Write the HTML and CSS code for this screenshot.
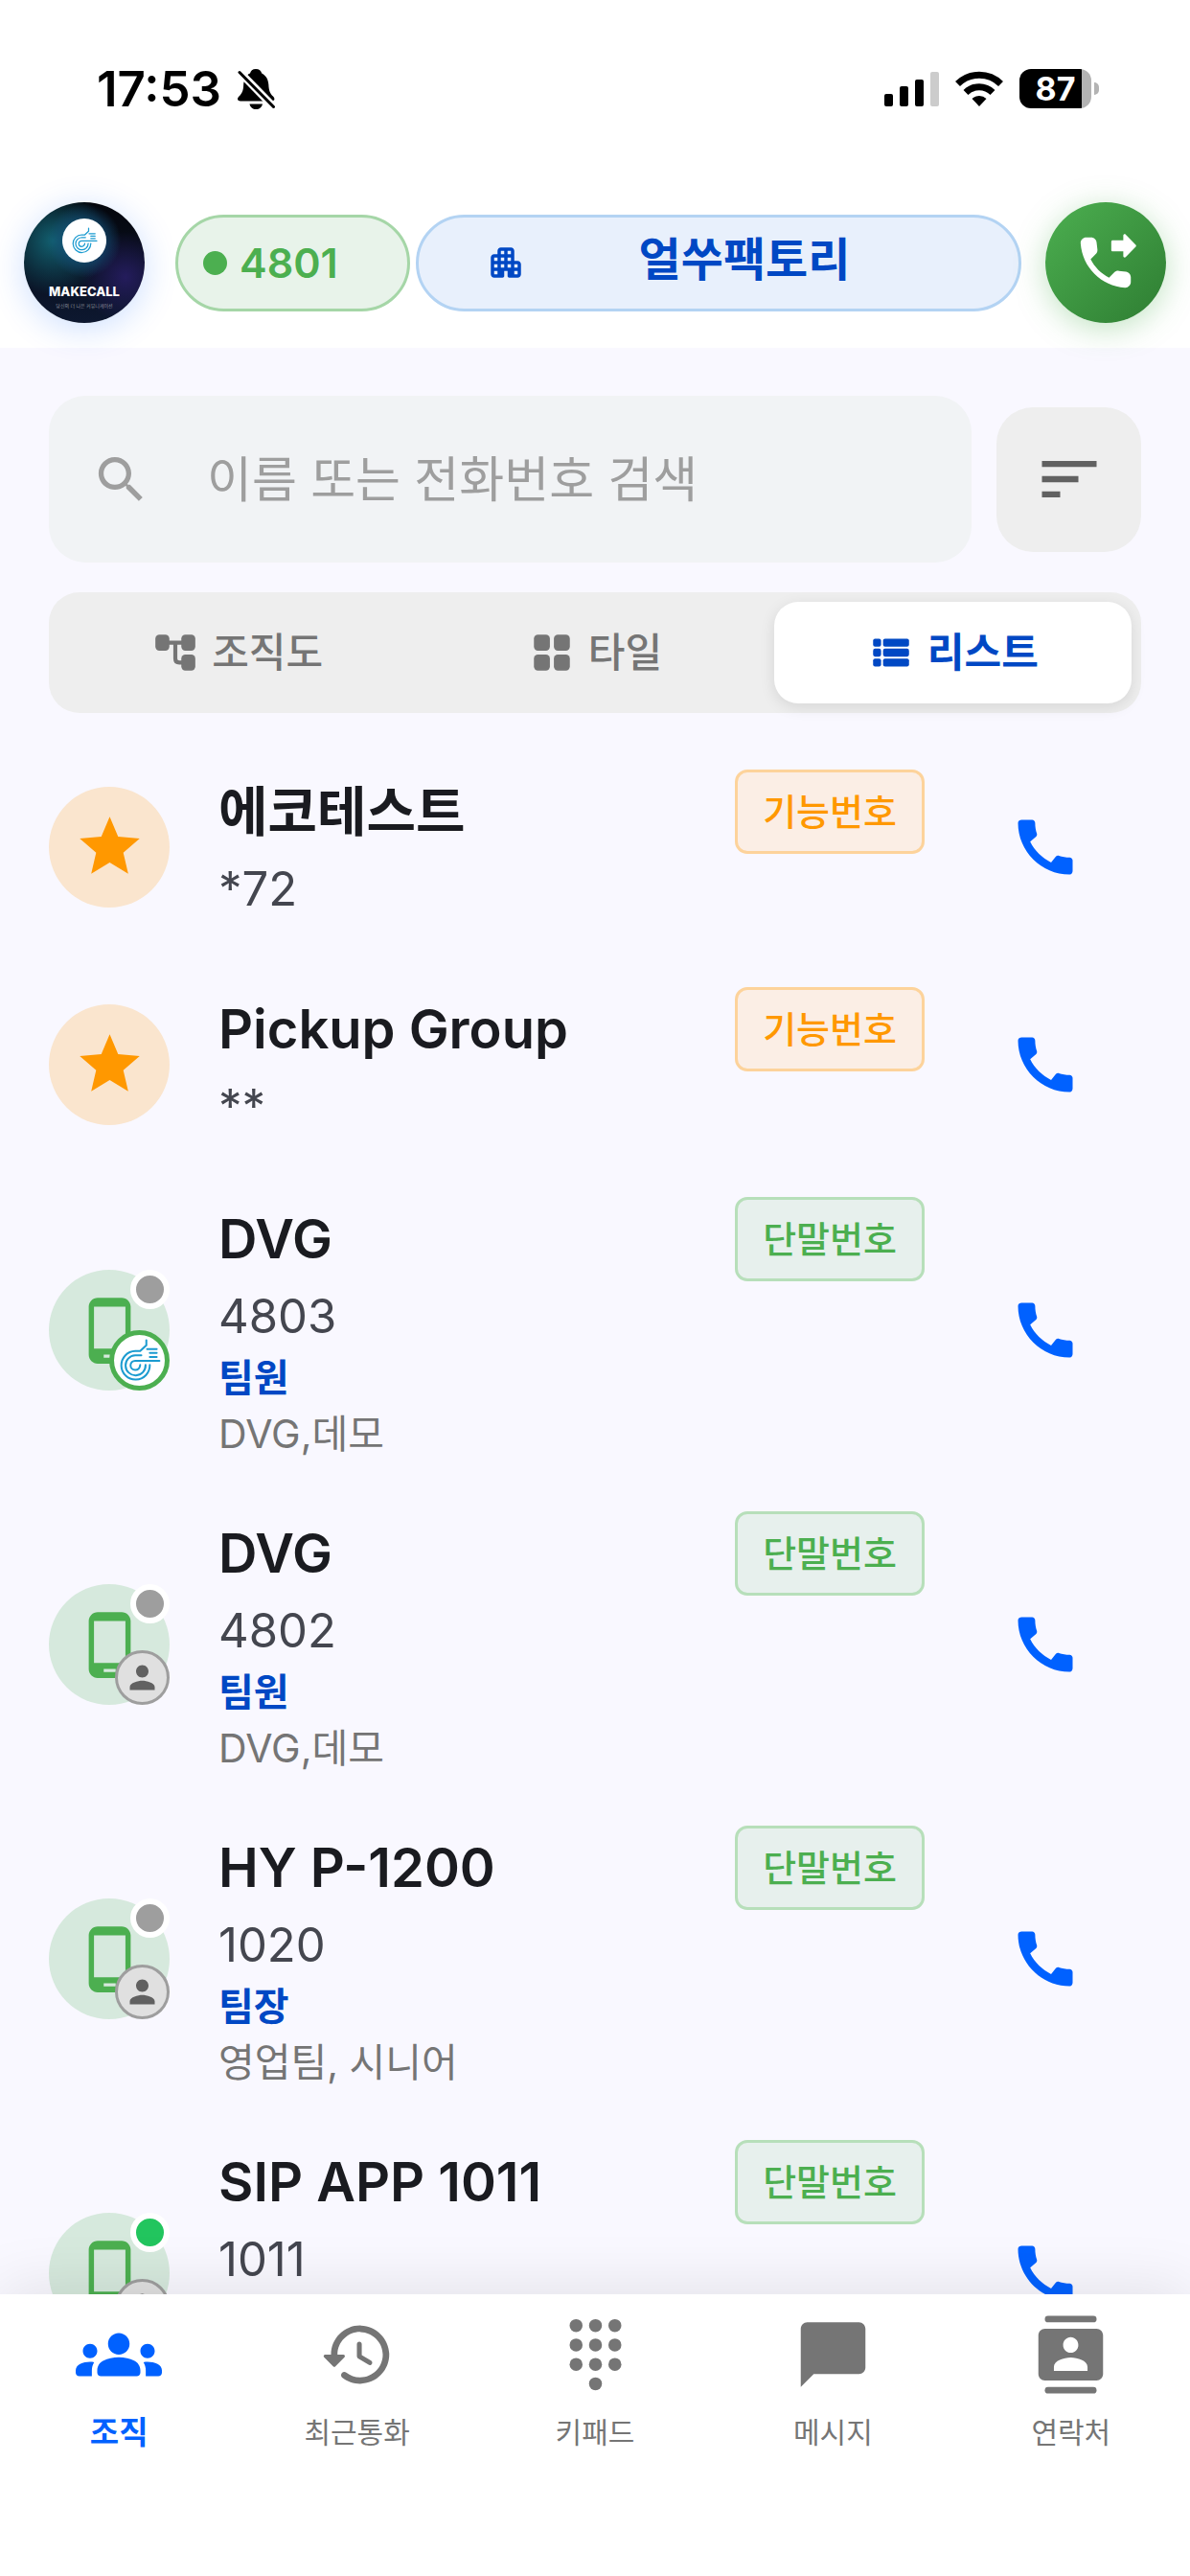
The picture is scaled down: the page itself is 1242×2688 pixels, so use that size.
FILE: index.html
```html
<!DOCTYPE html>
<html lang="ko">
<head>
    <meta charset="UTF-8">
    <meta name="viewport" content="width=device-width, initial-scale=1.0">
    <title>MAKECALL</title>
    <link rel="stylesheet" href="styles.css">
</head>
<body>
    <!-- 아이콘 모음 -->
    <svg class="sprite" aria-hidden="true">
        <symbol id="i-call" viewBox="0 0 24 24">
            <path d="M20.01 15.38c-1.23 0-2.42-.2-3.53-.56-.35-.12-.74-.03-1.01.24l-1.57 1.97c-2.83-1.35-5.48-3.9-6.89-6.83l1.95-1.66c.27-.28.35-.67.24-1.02-.37-1.11-.56-2.3-.56-3.53 0-.54-.45-.99-.99-.99H4.19C3.65 3 3 3.24 3 3.99 3 13.28 10.73 21 20.01 21c.71 0 .99-.63.99-1.18v-3.45c0-.54-.45-.99-.99-.99z"/>
        </symbol>
        <symbol id="i-star" viewBox="0 0 24 24">
            <path d="M12 17.27L18.18 21l-1.64-7.03L22 9.24l-7.19-.61L12 2 9.19 8.63 2 9.24l5.46 4.73L5.82 21z"/>
        </symbol>
        <symbol id="i-phone" viewBox="0 0 24 24">
            <path d="M16 1H8C6.34 1 5 2.34 5 4v16c0 1.66 1.34 3 3 3h8c1.66 0 3-1.34 3-3V4c0-1.66-1.34-3-3-3zm-2 20h-4v-1h4v1zm3.25-3H6.75V4h10.5v14z"/>
        </symbol>
        <symbol id="i-person" viewBox="0 0 24 24">
            <path d="M12 12c2.21 0 4-1.79 4-4s-1.79-4-4-4-4 1.79-4 4 1.79 4 4 4zm0 2c-2.67 0-8 1.34-8 4v2h16v-2c0-2.66-5.33-4-8-4z"/>
        </symbol>
        <symbol id="i-logo" viewBox="310 460 112 112">
            <g fill="none" stroke="#1b9bd0" stroke-width="5" stroke-linecap="round">
                <path d="M384 464v13l-16 15h-13a37 37 0 1 0 38 36"/>
                <path d="M371 503h-16a26 26 0 1 0 27 25"/>
                <path d="M418 517h-63a12 12 0 1 0 0 24c7 0 12-5 13-13"/>
                <path d="M386 487h25M393 497h18M393 507h18"/>
            </g>
        </symbol>
    </svg>

    <div class="app">
        <div class="status">
            <div class="status_left">
                <span class="time">17:53</span>
                <svg class="bell" viewBox="0 0 40 42">
                    <path d="M19 0c3.600 0 5.500 2 6.200 4.500C30 7 31.800 11 32.300 16c.4 7 1.500 9.500 4.700 12.500 2.500 2.500 1.500 5-1.500 5H3c-3.200 0-4-2.700-1.500-5C4.500 25.500 6 23 6.200 16 6.500 11 8.500 6.500 13 4.500 13.700 2 15.500 0 19 0zM12.500 36.500h13.500c-.7 3.500-3.300 5.500-6.700 5.500s-6.200-2-6.800-5.500z"/>
                    <path d="M2 3l36 37" stroke="#fff" stroke-width="8"/>
                    <path d="M2 3.500l35.500 36" stroke="#000" stroke-width="3" stroke-linecap="round"/>
                </svg>
            </div>
            <div class="status_right">
                <svg class="signal" viewBox="0 0 57 36">
                    <rect x="0" y="23" width="9" height="13" rx="2"/>
                    <rect x="16" y="15" width="9" height="21" rx="2"/>
                    <rect x="32" y="8" width="9" height="28" rx="2"/>
                    <rect x="48" y="0" width="9" height="36" rx="2" fill="#ccc"/>
                </svg>
                <svg class="wifi" viewBox="0 0 50 37">
                    <g fill="none" stroke="#000" stroke-width="7">
                        <path d="M2.500 13.500a32 32 0 0 1 45 0"/>
                        <path d="M11 22.500a20 20 0 0 1 28 0"/>
                    </g>
                    <path d="M25 37l-7.500-8a11 11 0 0 1 15 0z"/>
                </svg>
                <div class="battery"><span class="battery_body">87</span><span class="battery_tip"></span></div>
            </div>
        </div>

        <header class="header">
            <a href="#" class="profile" aria-label="MAKECALL">
                <span class="profile_logo"><svg><use href="#i-logo"/></svg></span>
                <strong>MAKECALL</strong>
                <small>당신의 더 나은 커뮤니케이션</small>
            </a>
            <div class="pills">
                <button type="button" class="pill extension"><i class="dot"></i>4801</button>
                <button type="button" class="pill company">
                    <svg viewBox="0 0 24 24"><path d="M17 11V5c0-1.100-.9-2-2-2H9c-1.100 0-2 .9-2 2v2H5c-1.100 0-2 .9-2 2v10c0 1.100.9 2 2 2h5c.55 0 1-.45 1-1v-3h2v3c0 .55.45 1 1 1h5c1.100 0 2-.9 2-2v-6c0-1.100-.9-2-2-2h-2zM7 19H5v-2h2v2zm0-4H5v-2h2v2zm0-4H5V9h2v2zm4 4H9v-2h2v2zm0-4H9V9h2v2zm0-4H9V5h2v2zm4 8h-2v-2h2v2zm0-4h-2V9h2v2zm0-4h-2V5h2v2zm4 12h-2v-2h2v2zm0-4h-2v-2h2v2z"/></svg>
                    <span>얼쑤팩토리</span>
                </button>
            </div>
            <button type="button" class="forward" aria-label="착신전환">
                <svg viewBox="0 0 24 24">
                    <path d="M19.230 15.260l-2.540-.29c-.61-.07-1.210.14-1.640.57l-1.840 1.840c-2.830-1.440-5.150-3.750-6.590-6.590l1.850-1.850c.43-.43.64-1.030.57-1.640l-.29-2.520c-.12-1.010-.97-1.770-1.990-1.770H5.030c-1.130 0-2.070.94-2 2.070.53 8.540 7.360 15.360 15.890 15.890 1.130.07 2.070-.87 2.070-2v-1.730c.01-1.010-.75-1.860-1.760-1.980z"/>
                    <path d="M14.500 4h3.800V2.300c0-.45.54-.67.85-.35l3.600 3.700c.2.2.2.5 0 .7l-3.600 3.700c-.31.32-.85.1-.85-.35V8h-3.800c-.28 0-.5-.22-.5-.5v-3c0-.28.22-.5.500-.5z"/>
                </svg>
            </button>
        </header>

        <main class="content">
            <div class="search_row">
                <label class="search">
                    <svg viewBox="0 0 24 24"><path d="M15.500 14h-.79l-.28-.27C15.410 12.590 16 11.110 16 9.500 16 5.910 13.090 3 9.500 3S3 5.910 3 9.500 5.910 16 9.500 16c1.610 0 3.090-.59 4.230-1.570l.27.28v.79l5 4.990L20.490 19l-4.990-5zm-6 0C7.010 14 5 11.990 5 9.500S7.010 5 9.500 5 14 7.010 14 9.500 11.990 14 9.500 14z"/></svg>
                    <input type="text" placeholder="이름 또는 전화번호 검색" aria-label="이름 또는 전화번호 검색">
                </label>
                <button type="button" class="sort" aria-label="정렬">
                    <svg viewBox="0 0 24 24"><path d="M3 18h6v-2H3v2zM3 6v2h18V6H3zm0 7h12v-2H3v2z"/></svg>
                </button>
            </div>

            <div class="tabs">
                <button type="button" class="tab">
                    <svg viewBox="0 0 24 24">
                        <rect x="2" y="3" width="7" height="8" rx="2"/>
                        <rect x="15" y="3" width="7" height="8" rx="2"/>
                        <rect x="15" y="13" width="7" height="8" rx="2"/>
                        <path d="M8 7h8M12 7v8c0 1.500.8 2 2 2h2" fill="none" stroke="currentColor" stroke-width="2"/>
                    </svg>
                    조직도
                </button>
                <button type="button" class="tab">
                    <svg viewBox="0 0 24 24">
                        <rect x="3" y="3" width="8" height="8" rx="2"/>
                        <rect x="13" y="3" width="8" height="8" rx="2"/>
                        <rect x="3" y="13" width="8" height="8" rx="2"/>
                        <rect x="13" y="13" width="8" height="8" rx="2"/>
                    </svg>
                    타일
                </button>
                <button type="button" class="tab on">
                    <svg viewBox="0 0 24 24">
                        <rect x="3" y="5" width="4" height="4" rx="1"/>
                        <rect x="8" y="5" width="13" height="4" rx="1"/>
                        <rect x="3" y="10" width="4" height="4" rx="1"/>
                        <rect x="8" y="10" width="13" height="4" rx="1"/>
                        <rect x="3" y="15" width="4" height="4" rx="1"/>
                        <rect x="8" y="15" width="13" height="4" rx="1"/>
                    </svg>
                    리스트
                </button>
            </div>
        </main>

        <ul class="list">
            <li class="item feature">
                <div class="avatar"><svg class="avatar_icon"><use href="#i-star"/></svg></div>
                <div class="info">
                    <div class="title"><h2>에코테스트</h2><span class="badge">기능번호</span></div>
                    <p class="number">*72</p>
                </div>
                <button type="button" class="call" aria-label="에코테스트 전화"><svg><use href="#i-call"/></svg></button>
            </li>
            <li class="item feature">
                <div class="avatar"><svg class="avatar_icon"><use href="#i-star"/></svg></div>
                <div class="info">
                    <div class="title"><h2>Pickup Group</h2><span class="badge">기능번호</span></div>
                    <p class="number">**</p>
                </div>
                <button type="button" class="call" aria-label="Pickup Group 전화"><svg><use href="#i-call"/></svg></button>
            </li>
            <li class="item">
                <div class="avatar">
                    <svg class="avatar_icon"><use href="#i-phone"/></svg>
                    <span class="presence"></span>
                    <span class="member brand"><svg><use href="#i-logo"/></svg></span>
                </div>
                <div class="info">
                    <div class="title"><h2>DVG</h2><span class="badge">단말번호</span></div>
                    <p class="number">4803</p>
                    <p class="position">팀원</p>
                    <p class="dept">DVG,데모</p>
                </div>
                <button type="button" class="call" aria-label="4803 전화"><svg><use href="#i-call"/></svg></button>
            </li>
            <li class="item">
                <div class="avatar">
                    <svg class="avatar_icon"><use href="#i-phone"/></svg>
                    <span class="presence"></span>
                    <span class="member"><svg><use href="#i-person"/></svg></span>
                </div>
                <div class="info">
                    <div class="title"><h2>DVG</h2><span class="badge">단말번호</span></div>
                    <p class="number">4802</p>
                    <p class="position">팀원</p>
                    <p class="dept">DVG,데모</p>
                </div>
                <button type="button" class="call" aria-label="4802 전화"><svg><use href="#i-call"/></svg></button>
            </li>
            <li class="item">
                <div class="avatar">
                    <svg class="avatar_icon"><use href="#i-phone"/></svg>
                    <span class="presence"></span>
                    <span class="member"><svg><use href="#i-person"/></svg></span>
                </div>
                <div class="info">
                    <div class="title"><h2>HY P-1200</h2><span class="badge">단말번호</span></div>
                    <p class="number">1020</p>
                    <p class="position">팀장</p>
                    <p class="dept">영업팀, 시니어</p>
                </div>
                <button type="button" class="call" aria-label="1020 전화"><svg><use href="#i-call"/></svg></button>
            </li>
            <li class="item tall">
                <div class="avatar">
                    <svg class="avatar_icon"><use href="#i-phone"/></svg>
                    <span class="presence online"></span>
                    <span class="member"><svg><use href="#i-person"/></svg></span>
                </div>
                <div class="info">
                    <div class="title"><h2>SIP APP 1011</h2><span class="badge">단말번호</span></div>
                    <p class="number">1011</p>
                </div>
                <button type="button" class="call" aria-label="1011 전화"><svg><use href="#i-call"/></svg></button>
            </li>
        </ul>

        <nav class="nav">
            <a href="#" class="on">
                <svg viewBox="0 0 24 24"><path d="M12 12.750c1.630 0 3.070.39 4.240.9 1.080.48 1.760 1.560 1.760 2.730V17c0 .55-.45 1-1 1H7c-.55 0-1-.45-1-1v-.61c0-1.180.68-2.260 1.760-2.730 1.170-.52 2.610-.91 4.240-.91zM4 13c1.100 0 2-.9 2-2s-.9-2-2-2-2 .9-2 2 .9 2 2 2zm1.130 1.100C4.760 14.040 4.390 14 4 14c-.99 0-1.930.21-2.780.58C.48 14.900 0 15.620 0 16.430V17c0 .55.45 1 1 1h3.500v-1.610c0-.83.23-1.610.63-2.290zM20 13c1.100 0 2-.9 2-2s-.9-2-2-2-2 .9-2 2 .9 2 2 2zm4 3.430c0-.81-.48-1.530-1.220-1.850-.85-.37-1.790-.58-2.780-.58-.39 0-.76.04-1.130.1.4.68.63 1.460.63 2.290V18H23c.55 0 1-.45 1-1v-.57zM12 6c1.660 0 3 1.340 3 3s-1.340 3-3 3-3-1.340-3-3 1.340-3 3-3z"/></svg>
                <span>조직</span>
            </a>
            <a href="#">
                <svg viewBox="0 0 24 24"><path d="M13.260 3C8.170 2.860 4 6.950 4 12H2.210c-.45 0-.67.54-.35.85l2.790 2.800c.2.2.51.2.71 0l2.790-2.800c.31-.31.09-.85-.36-.85H6c0-3.900 3.180-7.050 7.100-7 3.720.05 6.850 3.180 6.900 6.900.05 3.910-3.100 7.100-7 7.100-1.610 0-3.100-.55-4.280-1.480-.4-.31-.96-.28-1.320.08-.42.43-.39 1.130.08 1.490C9 20.290 10.910 21 13 21c5.050 0 9.140-4.170 9-9.260-.13-4.690-4.050-8.610-8.740-8.740zm-.51 5c-.41 0-.75.34-.75.75v3.680c0 .35.19.68.49.86l3.120 1.850c.36.21.82.09 1.030-.26.21-.36.09-.82-.26-1.030l-2.880-1.710v-3.400c0-.4-.34-.74-.75-.74z"/></svg>
                <span>최근통화</span>
            </a>
            <a href="#">
                <svg viewBox="0 0 24 24">
                    <circle cx="6" cy="3" r="2"/><circle cx="12" cy="3" r="2"/><circle cx="18" cy="3" r="2"/>
                    <circle cx="6" cy="9" r="2"/><circle cx="12" cy="9" r="2"/><circle cx="18" cy="9" r="2"/>
                    <circle cx="6" cy="15" r="2"/><circle cx="12" cy="15" r="2"/><circle cx="18" cy="15" r="2"/>
                    <circle cx="12" cy="21" r="2"/>
                </svg>
                <span>키패드</span>
            </a>
            <a href="#">
                <svg viewBox="0 0 24 24"><path d="M20 2H4c-1.100 0-2 .9-2 2v18l4-4h14c1.100 0 2-.9 2-2V4c0-1.100-.9-2-2-2z"/></svg>
                <span>메시지</span>
            </a>
            <a href="#">
                <svg viewBox="0 0 24 24">
                    <rect x="4" y="0" width="16" height="2" rx="1"/>
                    <rect x="4" y="22" width="16" height="2" rx="1"/>
                    <path d="M20 4H4c-1.100 0-2 .9-2 2v12c0 1.100.9 2 2 2h16c1.100 0 2-.9 2-2V6c0-1.100-.9-2-2-2zm-8 2.600c1.300 0 2.350 1.080 2.350 2.400S13.300 11.400 12 11.400 9.650 10.320 9.650 9 10.700 6.600 12 6.600zM17.200 17H6.800v-1.200c0-1.900 3.100-2.900 5.200-2.900s5.200 1 5.200 2.900V17z"/>
                </svg>
                <span>연락처</span>
            </a>
        </nav>
    </div>
</body>
</html>
```
FILE: styles.css
```css
*{
    box-sizing: border-box;
    margin: 0;
    padding: 0;
}

body{
    font-family: Inter, "Noto Sans CJK KR", sans-serif;
    background: #f9f8ff;
    color: #1a1b20;
}

button, input{
    border: 0;
    background: none;
    font: inherit;
    color: inherit;
}

a{
    color: inherit;
    text-decoration: none;
}

ul{list-style: none;}

svg{
    display: block;
    flex: none;
    fill: currentColor;
}

.sprite{
    position: absolute;
    width: 0;
    height: 0;
}

.app{
    display: flex;
    flex-direction: column;
    height: 100vh;
    overflow: hidden;
}

/* 상태바 */
.status{
    display: flex;
    justify-content: space-between;
    align-items: center;
    flex: none;
    height: 185px;
    padding: 0 95px 0 101px;
    background: #fff;
    color: #000;
}

.status_left, .status_right{
    display: flex;
    align-items: center;
    gap: 17px;
}

.time{
    font-size: 51px;
    font-weight: 600;
}

.bell{
    width: 40px;
    height: 42px;
}

.signal{
    width: 57px;
    height: 36px;
}

.wifi{
    width: 50px;
    height: 37px;
}

.battery{
    display: flex;
    align-items: center;
    gap: 3px;
}

.battery_body{
    width: 75px;
    border-radius: 12px;
    background: linear-gradient(90deg, #000 87%, #b3b3b3 87%);
    color: #fff;
    font-size: 34px;
    font-weight: 700;
    line-height: 41px;
    text-align: center;
}

.battery_tip{
    width: 5px;
    height: 13px;
    border-radius: 0 6px 6px 0;
    background: #b3b3b3;
}

/* 헤더 */
.header{
    display: flex;
    align-items: center;
    gap: 25px;
    flex: none;
    padding: 26px 25px;
    background: #fff;
}

.profile{
    display: flex;
    flex-direction: column;
    align-items: center;
    flex: none;
    width: 126px;
    height: 126px;
    padding-top: 17px;
    border-radius: 50%;
    overflow: hidden;
    background:
        radial-gradient(circle at 50% 32%, #1d6f9e 0, #15507a80 24%, transparent 36%),
        radial-gradient(circle at 24% 32%, #126070 0, transparent 44%),
        radial-gradient(circle at 84% 62%, #241c5c 0, transparent 36%),
        linear-gradient(#04060c, #0d1830);
    box-shadow: 0 6px 36px #0061ff33;
    color: #fff;
}

.profile_logo{
    display: flex;
    justify-content: center;
    align-items: center;
    width: 46px;
    height: 46px;
    margin-bottom: 22px;
    border-radius: 50%;
    background: #fff;
}

.profile_logo svg{
    width: 28px;
    height: 28px;
}

.profile strong{
    font-size: 13px;
    font-weight: 800;
    line-height: 16px;
}

.profile small{
    color: #8b8f99;
    font-size: 5px;
    line-height: 14px;
    white-space: nowrap;
}

.pills{
    display: flex;
    flex: 1;
    gap: 6px;
    margin-left: 7px;
}

.pill{
    display: flex;
    align-items: center;
    height: 101px;
    border: 3px solid;
    border-radius: 51px;
}

.extension{
    flex: none;
    gap: 13px;
    width: 245px;
    padding: 0 26px;
    border-color: #a5d6a7;
    background: #e8f3ea;
    color: #4caf50;
    font-size: 43px;
    font-weight: 600;
}

.dot{
    width: 25px;
    height: 25px;
    border-radius: 50%;
    background: #4caf50;
}

.company{
    flex: 1;
    gap: 12px;
    padding: 0 70px;
    border-color: #b3d3f3;
    background: #e8f0fc;
    color: #0048c4;
    font-size: 48px;
    font-weight: 700;
    line-height: 64px;
}

.company svg{
    width: 42px;
    height: 42px;
}

.company span{
    flex: 1;
    padding-bottom: 6px;
    text-align: center;
}

.forward{
    display: flex;
    justify-content: center;
    align-items: center;
    flex: none;
    width: 126px;
    height: 126px;
    border-radius: 50%;
    background: linear-gradient(135deg, #4caf50, #2e7d32);
    box-shadow: 0 6px 32px #4caf5059;
    color: #fff;
}

.forward svg{
    width: 70px;
    height: 70px;
}

/* 검색 */
.content{
    flex: none;
    padding: 50px 51px 26px;
}

.search_row{
    display: flex;
    align-items: center;
    gap: 26px;
    margin-bottom: 31px;
}

.search{
    display: flex;
    align-items: center;
    flex: 1;
    gap: 58px;
    min-width: 0;
    height: 174px;
    padding: 0 44px;
    border-radius: 38px;
    background: #f1f3f5;
    color: #9e9e9e;
}

.search svg{
    width: 63px;
    height: 63px;
}

.search input{
    flex: 1;
    min-width: 0;
    font-size: 51px;
    outline: none;
}

.search input::placeholder{color: #9e9e9e;}

.sort{
    display: flex;
    justify-content: center;
    align-items: center;
    flex: none;
    width: 151px;
    height: 151px;
    border-radius: 38px;
    background: #eee;
    color: #616161;
}

.sort svg{
    width: 76px;
    height: 76px;
}

.tabs{
    display: flex;
    padding: 10px;
    border-radius: 32px;
    background: #eee;
}

.tab{
    display: flex;
    justify-content: center;
    align-items: center;
    flex: 1;
    gap: 13px;
    height: 106px;
    border-radius: 25px;
    color: #757575;
    font-size: 42px;
    font-weight: 500;
    line-height: 56px;
}

.tab svg{
    width: 50px;
    height: 50px;
}

.tab.on{
    background: #fff;
    box-shadow: 0 4px 16px #0000001a;
    color: #0048c4;
    font-weight: 700;
}

/* 연락처 목록 */
.list{
    flex: 1;
    min-height: 0;
    overflow: hidden;
}

.item{
    display: flex;
    align-items: center;
    gap: 51px;
    height: 328px;
    padding: 0 76px 0 51px;
}

.item.feature{height: 227px;}

.avatar{
    position: relative;
    display: flex;
    justify-content: center;
    align-items: center;
    flex: none;
    width: 126px;
    height: 126px;
    border-radius: 50%;
    background: #d6e9dd;
    color: #4caf50;
}

.feature .avatar{
    background: #fae5ce;
    color: #ff9800;
}

.avatar_icon{
    width: 75px;
    height: 75px;
}

.presence{
    position: absolute;
    top: 0;
    right: 0;
    width: 41px;
    height: 41px;
    border: 6px solid #fff;
    border-radius: 50%;
    background: #9e9e9e;
}

.presence.online{background: #22c55e;}

.member{
    position: absolute;
    right: 0;
    bottom: 0;
    display: flex;
    justify-content: center;
    align-items: center;
    width: 57px;
    height: 57px;
    border: 3px solid #9e9e9e;
    border-radius: 50%;
    background: #e0e0e0;
    color: #616161;
}

.member svg{
    width: 39px;
    height: 39px;
}

.member.brand{
    width: 63px;
    height: 63px;
    border: 5px solid #4caf50;
    background: #fff;
}

.member.brand svg{
    width: 45px;
    height: 45px;
}

.info{
    flex: 1;
    min-width: 0;
}

.title{
    display: flex;
    justify-content: space-between;
    align-items: center;
}

.title h2{
    font-size: 56px;
    font-weight: 600;
    line-height: 72px;
}

.badge{
    padding: 0 26px;
    border: 3px solid #b7dfba;
    border-radius: 13px;
    background: #e7f0ed;
    color: #4caf50;
    font-size: 38px;
    font-weight: 500;
    line-height: 82px;
}

.feature .badge{
    border-color: #fdd39b;
    background: #fbeee5;
    color: #ff9800;
}

.number{
    color: #44464f;
    font-size: 49px;
    line-height: 74px;
}

.position{
    color: #0048c4;
    font-size: 40px;
    font-weight: 700;
    line-height: 54px;
}

.dept{
    color: #757575;
    font-size: 41px;
    line-height: 62px;
}

/* 화면 아래로 이어지는 항목 */
.item.tall{
    align-items: flex-start;
    padding-top: 25px;
}

.item.tall .avatar{margin-top: 76px;}

.item.tall .call{margin-top: 64px;}

.call{
    display: flex;
    justify-content: center;
    align-items: center;
    flex: none;
    width: 150px;
    height: 150px;
    color: #0061ff;
}

.call svg{
    width: 76px;
    height: 76px;
}

/* 하단 메뉴 */
.nav{
    position: relative;
    display: flex;
    flex: none;
    height: 294px;
    padding-top: 18px;
    background: #fff;
    box-shadow: 0 -6px 60px #00000018;
    color: #757575;
}

.nav a{
    display: flex;
    flex-direction: column;
    align-items: center;
    flex: 1;
    gap: 12px;
    font-size: 30px;
    line-height: 48px;
}

.nav svg{
    width: 81px;
    height: 90px;
}

.nav .on{
    color: #0061ff;
    font-size: 33px;
    font-weight: 700;
}

.nav .on svg{width: 90px;}
```
